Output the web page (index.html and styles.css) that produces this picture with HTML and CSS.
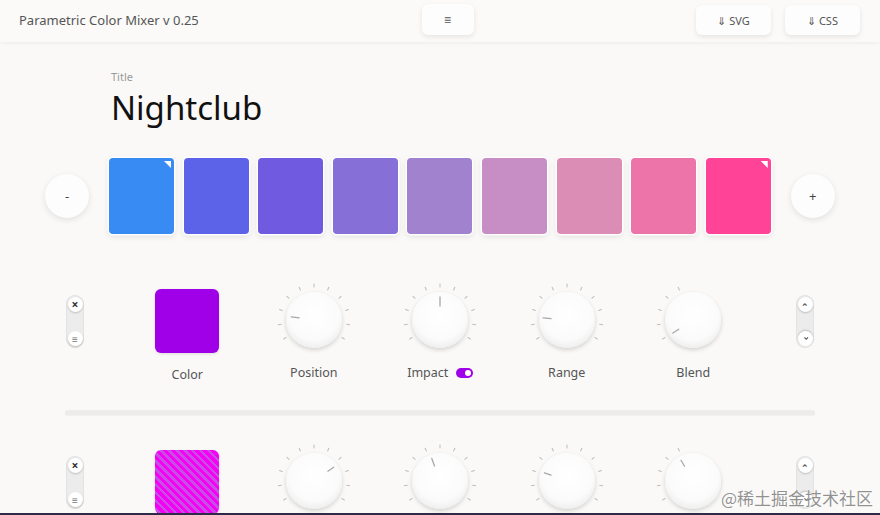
FILE: index.html
```html
<!DOCTYPE html>
<html>
<head>
<meta charset="utf-8">
<link rel="stylesheet" href="styles.css">
</head>
<body>
<svg class="defs" width="0" height="0" aria-hidden="true">
  <defs>
    <radialGradient id="kg" cx="50%" cy="40%" r="60%">
      <stop offset="0" stop-color="#ffffff"/>
      <stop offset="0.75" stop-color="#fbfbfb"/>
      <stop offset="1" stop-color="#efefef"/>
    </radialGradient>
    <filter id="ks" x="-40%" y="-40%" width="180%" height="180%">
      <feDropShadow dx="0" dy="2" stdDeviation="2.2" flood-color="#000" flood-opacity="0.16"/>
    </filter>
    <line id="tk" x1="40" y1="4" x2="40" y2="7" stroke="#bdbdbd" stroke-width="1" stroke-linecap="round"/>
    <g id="ticks-half">
      <use href="#tk" transform="rotate(-122 40 40)"/>
      <use href="#tk" transform="rotate(-97.6 40 40)"/>
      <use href="#tk" transform="rotate(-73.2 40 40)"/>
      <use href="#tk" transform="rotate(-48.8 40 40)"/>
      <use href="#tk" transform="rotate(-24.4 40 40)"/>
    </g>
    <g id="ticks">
      <use href="#ticks-half"/>
      <use href="#tk"/>
      <use href="#tk" transform="rotate(24.4 40 40)"/>
      <use href="#tk" transform="rotate(48.8 40 40)"/>
      <use href="#tk" transform="rotate(73.2 40 40)"/>
      <use href="#tk" transform="rotate(97.6 40 40)"/>
      <use href="#tk" transform="rotate(122 40 40)"/>
    </g>
    <circle id="knob" cx="40" cy="40" r="28" fill="url(#kg)" filter="url(#ks)"/>
  </defs>
</svg>

<header class="topbar">
  <div class="app-title">Parametric Color Mixer v 0.25</div>
  <div class="center"><button class="btn menu">≡</button></div>
  <div class="right">
    <button class="btn dl">⇓ SVG</button>
    <button class="btn dl">⇓ CSS</button>
  </div>
</header>

<main>
  <section class="title-block">
    <div class="label-small">Title</div>
    <h1 class="name">Nightclub</h1>
  </section>

  <section class="palette">
    <button class="round">-</button>
    <div class="swatches">
      <div class="swatch marked" style="background:#388bf2"></div>
      <div class="swatch" style="background:#5c63e8"></div>
      <div class="swatch" style="background:#705ae0"></div>
      <div class="swatch" style="background:#8670d8"></div>
      <div class="swatch" style="background:#a082cf"></div>
      <div class="swatch" style="background:#c68ec4"></div>
      <div class="swatch" style="background:#db8db6"></div>
      <div class="swatch" style="background:#ec74a9"></div>
      <div class="swatch marked" style="background:#ff4396"></div>
    </div>
    <button class="round">+</button>
  </section>

  <section class="stop">
    <div class="pill">
      <span class="pbtn x">×</span>
      <span class="pbtn grip">≡</span>
    </div>
    <div class="cols">
      <div class="col">
        <div class="color-square" style="background:#a000e8"></div>
        <div class="clabel">Color</div>
      </div>
      <div class="col">
        <svg class="knob" viewBox="0 0 80 80"><use href="#ticks"/><use href="#knob"/><line class="ind" x1="40" y1="17" x2="40" y2="25" transform="rotate(-82 40 40)"/></svg>
        <div class="klabel">Position</div>
      </div>
      <div class="col">
        <svg class="knob" viewBox="0 0 80 80"><use href="#ticks"/><use href="#knob"/><line class="ind" x1="40" y1="17" x2="40" y2="26" transform="rotate(0 40 40)"/></svg>
        <div class="klabel">Impact <span class="toggle"></span></div>
      </div>
      <div class="col">
        <svg class="knob" viewBox="0 0 80 80"><use href="#ticks"/><use href="#knob"/><line class="ind" x1="40" y1="16" x2="40" y2="24" transform="rotate(-85 40 40)"/></svg>
        <div class="klabel">Range</div>
      </div>
      <div class="col">
        <svg class="knob" viewBox="0 0 80 80"><use href="#ticks-half"/><use href="#knob"/><line class="ind" x1="40" y1="16" x2="40" y2="23" transform="rotate(-123 40 40)"/></svg>
        <div class="klabel">Blend</div>
      </div>
    </div>
    <div class="pill right-pill">
      <span class="pbtn chev">⌃</span>
      <span class="pbtn chev down">⌃</span>
    </div>
  </section>

  <div class="divider"></div>

  <section class="stop second">
    <div class="pill">
      <span class="pbtn x">×</span>
      <span class="pbtn grip">≡</span>
    </div>
    <div class="cols">
      <div class="col">
        <div class="color-square striped"></div>
      </div>
      <div class="col">
        <svg class="knob" viewBox="0 0 80 80"><use href="#ticks"/><use href="#knob"/><line class="ind" x1="40" y1="16" x2="40" y2="23" transform="rotate(55 40 40)"/></svg>
      </div>
      <div class="col">
        <svg class="knob" viewBox="0 0 80 80"><use href="#ticks"/><use href="#knob"/><line class="ind" x1="40" y1="16" x2="40" y2="24" transform="rotate(-20 40 40)"/></svg>
      </div>
      <div class="col">
        <svg class="knob" viewBox="0 0 80 80"><use href="#ticks"/><use href="#knob"/><line class="ind" x1="40" y1="16" x2="40" y2="23" transform="rotate(-70 40 40)"/></svg>
      </div>
      <div class="col">
        <svg class="knob" viewBox="0 0 80 80"><use href="#ticks-half"/><use href="#knob"/><line class="ind" x1="40" y1="16" x2="40" y2="23" transform="rotate(-30 40 40)"/></svg>
      </div>
    </div>
    <div class="pill right-pill">
      <span class="pbtn chev">⌃</span>
      <span class="pbtn chev down">⌃</span>
    </div>
  </section>
</main>

<div class="watermark">@稀土掘金技术社区</div>
<div class="bottom-edge"></div>
</body>
</html>
```

FILE: styles.css
```css
* { box-sizing: border-box; }
html, body {
  margin: 0;
  height: 100%;
  overflow: hidden;
}
body {
  background: #faf9f8;
  font-family: "Noto Sans", "Open Sans", sans-serif;
  color: #333;
  position: relative;
}
.defs {
  position: absolute;
  width: 0;
  height: 0;
}

/* header */
.topbar {
  height: 42px;
  display: grid;
  grid-template-columns: 1fr auto 1fr;
  align-items: center;
  padding: 0 20px 0 19px;
  background: #fbfaf9;
  box-shadow: 0 1px 4px rgba(0,0,0,0.06);
  position: relative;
  z-index: 1;
}
.app-title {
  font-size: 13px;
  color: #555;
  margin-top: -3px;
}
.center { display: flex; }
.right {
  display: flex;
  justify-content: flex-end;
  gap: 14px;
}
.btn {
  font-family: "Noto Sans", sans-serif;
  border: none;
  background: #fdfdfd;
  border-radius: 6px;
  box-shadow: 0 2px 5px rgba(0,0,0,0.09);
  color: #555;
  font-size: 11px;
  cursor: pointer;
}
.menu {
  margin-left: 16px;
  width: 52px;
  height: 31px;
  margin-top: -4px;
  font-size: 12px;
}
.dl {
  width: 75px;
  height: 30px;
  margin-top: -2px;
}

/* title */
.title-block {
  padding: 28px 0 0 111px;
}
.label-small {
  font-size: 11px;
  line-height: 14px;
  color: #999;
}
.name {
  margin: 4px 0 0;
  font-size: 33px;
  line-height: 40px;
  font-weight: 400;
  color: #111;
}

/* palette */
.palette {
  display: flex;
  align-items: center;
  margin-top: 30px;
  padding-left: 45px;
}
.round {
  width: 44px;
  height: 44px;
  border-radius: 50%;
  border: none;
  background: #fdfdfd;
  box-shadow: 0 2px 6px rgba(0,0,0,0.1);
  color: #444;
  font-family: "Noto Sans", sans-serif;
  font-size: 13px;
  padding: 0;
}
.swatches {
  display: flex;
  gap: 9.6px;
  margin: 0 20px;
}
.swatch {
  width: 65px;
  height: 76px;
  border-radius: 4px;
  box-shadow: 0 0 0 1.5px #fff, 0 2px 6px rgba(0,0,0,0.13);
  position: relative;
}
.swatch.marked::after {
  content: "";
  position: absolute;
  top: 3px;
  right: 3px;
  width: 7px;
  height: 7px;
  background: #fff;
  clip-path: polygon(0 0, 100% 0, 100% 100%);
}

/* stop rows */
.stop {
  display: flex;
  align-items: flex-start;
  padding-left: 66px;
  margin-top: 55px;
  height: 121px;
}
.stop.second { margin-top: 35px; }
.pill {
  width: 18px;
  height: 53px;
  margin-top: 6px;
  border-radius: 9px;
  background: #ececec;
  box-shadow: inset 0 0 0 1px #e3e3e3;
  display: flex;
  flex-direction: column;
  justify-content: space-between;
  align-items: center;
  padding: 2px 0;
}
.pbtn {
  width: 15px;
  height: 15px;
  border-radius: 50%;
  background: #fff;
  box-shadow: 0 1px 2px rgba(0,0,0,0.2);
  display: flex;
  align-items: center;
  justify-content: center;
  font-size: 10px;
  line-height: 1;
  color: #777;
}
.pbtn.x {
  font-weight: 700;
  color: #333;
  font-size: 12px;
}
.pbtn.grip { font-size: 10px; }
.pbtn.chev {
  font-size: 9px;
  color: #555;
  font-weight: 700;
  padding-top: 3px;
}
.pbtn.chev.down { transform: rotate(180deg); }
.cols {
  display: flex;
  margin-left: 40px;
}
.col {
  width: 126.5px;
  display: flex;
  flex-direction: column;
  align-items: center;
}
.color-square {
  width: 64px;
  height: 64px;
  border-radius: 6px;
  box-shadow: 0 1px 3px rgba(0,0,0,0.12);
}
.striped {
  background: repeating-linear-gradient(45deg, #f500f5 0 3px, #c64fe4 3px 5.6px);
}
.clabel {
  margin-top: 14px;
  font-size: 12.5px;
  line-height: 16px;
  color: #555;
}
.knob {
  width: 80px;
  height: 80px;
  margin-top: -9px;
  display: block;
}
.ind {
  stroke: #a8a8a8;
  stroke-width: 1.3;
  stroke-linecap: round;
}
.klabel {
  margin-top: 5px;
  font-size: 12.5px;
  line-height: 16px;
  color: #555;
  display: flex;
  align-items: center;
  gap: 8px;
}
.toggle {
  width: 17px;
  height: 10px;
  border-radius: 5px;
  background: #a000e8;
  position: relative;
}
.toggle::after {
  content: "";
  position: absolute;
  right: 2px;
  top: 2px;
  width: 6px;
  height: 6px;
  border-radius: 50%;
  background: #fff;
}
.right-pill {
  margin-left: 39.5px;
}

.divider {
  margin: 0 65px;
  height: 5px;
  border-radius: 3px;
  background: #ececec;
  box-shadow: 0 1px 1px rgba(0,0,0,0.04);
}

.watermark {
  position: absolute;
  right: 7px;
  bottom: 7px;
  font-family: "Noto Sans CJK SC", sans-serif;
  font-size: 17px;
  line-height: 20px;
  color: rgba(110,110,110,0.75);
  text-shadow: 0 0 2px #fff;
}
.bottom-edge {
  position: absolute;
  left: 0;
  right: 0;
  bottom: 0;
  height: 2px;
  background: #2e2b48;
}
```
